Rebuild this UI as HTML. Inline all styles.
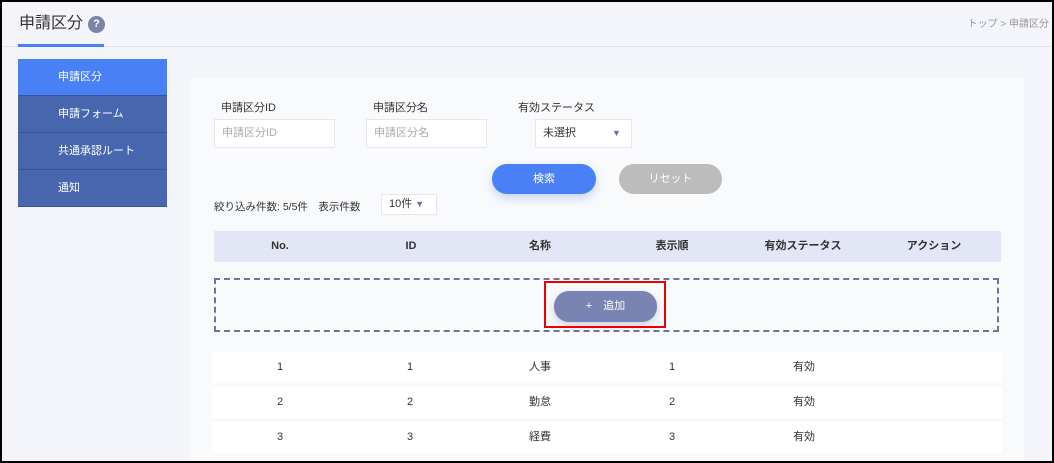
<!DOCTYPE html>
<html><head><meta charset="utf-8"><style>
*{box-sizing:border-box;margin:0;padding:0}
body{width:1054px;height:463px;overflow:hidden;background:#000;font-family:"Liberation Sans","Noto Sans CJK JP",sans-serif;}
.frame{position:absolute;left:2px;top:2px;width:1050px;height:459px;background:#f4f5fa;overflow:hidden}
.abs{position:absolute}
.title{left:17px;top:11px;font-size:16px;color:#333;line-height:22px}
.q{left:86px;top:14px;width:17px;height:17px;border-radius:50%;background:#7d83a8;color:#fff;font-size:11px;font-weight:bold;text-align:center;line-height:17px}
.hline{left:0;top:44px;width:1050px;height:1px;background:#e1e3ee}
.uline{left:16px;top:42px;width:86px;height:3px;background:#4a80f5}
.crumb{right:3px;top:13px;font-size:10px;color:#999}
.side{left:16px;top:57px;width:149px}
.side div{height:37px;line-height:36px;padding-left:40px;color:#fff;font-size:11px;background:#4766ae;border-bottom:1px solid #3a5596}
.side div.on{background:#4a80f5}
.card{left:188px;top:76px;width:834px;height:400px;background:#f9fafc;border-radius:4px}
.lbl{font-size:11px;color:#333}
.inp{background:#fff;border:1px solid #e6e7ee;height:29px;font-size:11px;color:#aaa;line-height:27px;padding-left:7px}
.btn{height:30px;border-radius:15px;color:#fff;font-size:11px;text-align:center;line-height:30px}
.th{left:212px;top:229px;width:787px;height:31px;background:#e3e7f5;font-size:11px;font-weight:bold;color:#333}
.th span,.row span{position:absolute;top:0;transform:translateX(-50%)}
.th span{line-height:31px}
.row{position:absolute;left:210px;width:790px;height:31px;background:#fff;font-size:11px;color:#333}
.row span{line-height:31px}
</style></head><body><div class="frame">
<div class="abs title">申請区分</div>
<div class="abs q">?</div>
<div class="abs hline"></div>
<div class="abs uline"></div>
<div class="abs crumb">トップ &gt; 申請区分</div>
<div class="abs side"><div class="on">申請区分</div><div>申請フォーム</div><div>共通承認ルート</div><div>通知</div></div>
<div class="abs card"></div>
<div class="abs lbl" style="left:219px;top:97px">申請区分ID</div>
<div class="abs lbl" style="left:371px;top:97px">申請区分名</div>
<div class="abs lbl" style="left:516px;top:97px">有効ステータス</div>
<div class="abs inp" style="left:212px;top:117px;width:121px">申請区分ID</div>
<div class="abs inp" style="left:364px;top:117px;width:121px">申請区分名</div>
<div class="abs inp" style="left:533px;top:117px;width:97px;color:#333">未選択<span style="position:absolute;left:76px;color:#6a7099;font-size:9px">▼</span></div>
<div class="abs btn" style="left:490px;top:162px;width:104px;background:#4a80f5;box-shadow:0 4px 10px rgba(74,128,245,.3)">検索</div>
<div class="abs btn" style="left:617px;top:162px;width:103px;background:#bcbcbc">リセット</div>
<div class="abs lbl" style="left:212px;top:197px;font-size:10.5px">絞り込み件数: 5/5件　表示件数</div>
<div class="abs inp" style="left:379px;top:192px;width:56px;height:21px;line-height:19px;color:#333">10件 <span style="color:#6a7099;font-size:9px">▼</span></div>
<div class="abs th"><span style="left:66px">No.</span><span style="left:197px">ID</span><span style="left:326px">名称</span><span style="left:458px">表示順</span><span style="left:589px">有効ステータス</span><span style="left:720px">アクション</span></div>
<div class="abs" style="left:212px;top:276px;width:785px;height:54px;border:2px dashed #6f7597"></div>
<div class="abs btn" style="left:552px;top:289px;width:103px;height:31px;background:#7a84b2;box-shadow:0 3px 8px rgba(100,110,170,.3)">+　追加</div>
<div class="abs" style="left:542px;top:279px;width:122px;height:47px;border:2px solid #e00"></div>
<div class="row" style="top:350px"><span style="left:68px">1</span><span style="left:198px">1</span><span style="left:328px">人事</span><span style="left:460px">1</span><span style="left:592px">有効</span></div>
<div class="row" style="top:385px"><span style="left:68px">2</span><span style="left:198px">2</span><span style="left:328px">勤怠</span><span style="left:460px">2</span><span style="left:592px">有効</span></div>
<div class="row" style="top:420px"><span style="left:68px">3</span><span style="left:198px">3</span><span style="left:328px">経費</span><span style="left:460px">3</span><span style="left:592px">有効</span></div>
</div></body></html>
